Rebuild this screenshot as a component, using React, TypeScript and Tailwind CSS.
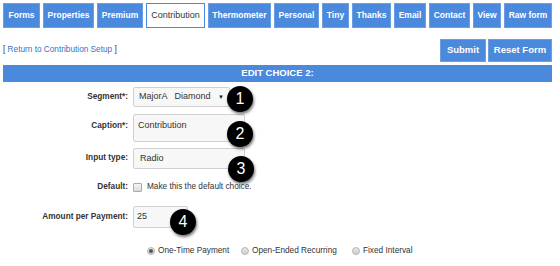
const tabs = [
  { label: "Forms", w: "w-[37px]" },
  { label: "Properties", w: "w-[51px]" },
  { label: "Premium", w: "w-[46px]" },
  { label: "Contribution", w: "w-[59px]", active: true },
  { label: "Thermometer", w: "w-[63px]" },
  { label: "Personal", w: "w-[45px]" },
  { label: "Tiny", w: "w-[27px]" },
  { label: "Thanks", w: "w-[39px]" },
  { label: "Email", w: "w-[32px]" },
  { label: "Contact", w: "w-[41px]" },
  { label: "View", w: "w-[28px]" },
  { label: "Raw form", w: "w-[48px]" },
];

const Badge = ({ n, className }: { n: number; className: string }) => (
  <div
    className={`absolute w-[26px] h-[26px] rounded-full bg-black text-white text-[16px] leading-none flex items-center justify-center shadow-[1px_2px_3px_rgba(0,0,0,0.55)] ${className}`}
  >
    {n}
  </div>
);

const Radio = ({ checked }: { checked?: boolean }) => (
  <span className="w-[8px] h-[8px] rounded-full border border-[#b5b5b5] bg-gradient-to-b from-[#e6e6e6] to-[#cfcfcf] flex items-center justify-center">
    {checked && <span className="w-[4px] h-[4px] rounded-full bg-[#555]" />}
  </span>
);

export default function App() {
  return (
    <div className="w-[560px] h-[266px] bg-white overflow-hidden font-['Liberation_Sans',Arial,sans-serif] text-[#333]">
      {/* tab strip */}
      <div className="flex gap-[3px] pl-[3px] pt-[3px]">
        {tabs.map((t) => (
          <div
            key={t.label}
            className={`${t.w} h-[25px] flex items-center justify-center whitespace-nowrap border ${
              t.active
                ? "bg-white text-[#333] border-[#4a89dc] text-[9px]"
                : "bg-[#4a89dc] text-white border-[#6c9fe2] font-bold text-[8.5px]"
            }`}
          >
            {t.label}
          </div>
        ))}
      </div>

      <div className="flex items-center justify-between pl-[3px] pr-[8px] mt-[11px] h-[23px]">
        <div className="text-[8.25px]">
          [ <span className="text-[#3a70c6]">Return to Contribution Setup</span> ]
        </div>
        <div className="flex gap-[2px] h-full">
          <button className="w-[46px] h-full bg-[#4a89dc] text-white font-bold text-[9.5px] border border-[#6c9fe2]">
            Submit
          </button>
          <button className="w-[64px] h-full bg-[#4a89dc] text-white font-bold text-[9.5px] border border-[#6c9fe2]">
            Reset Form
          </button>
        </div>
      </div>

      <div className="ml-[3px] mr-[8px] mt-[3px] h-[17px] bg-[#4a89dc] text-white font-bold text-[9.5px] flex items-center justify-center">
        EDIT CHOICE 2:
      </div>

      {/* form */}
      <div className="relative">
        <div className="flex items-center mt-[5px] h-[20px]">
          <div className="w-[128px] text-right font-bold text-[8.25px]">Segment*:</div>
          <div className="ml-[5px] w-[97px] h-full border border-[#d0d0d0] bg-[#f7f7f7] rounded-[2px] flex items-center px-[5px] text-[9px] whitespace-pre">
            <span className="flex-1">MajorA   Diamond</span>
            <span className="text-[6px] text-[#222]">▼</span>
          </div>
        </div>

        <div className="flex items-start mt-[7px] h-[28px]">
          <div className="w-[128px] text-right font-bold text-[8.25px] pt-[6px]">Caption*:</div>
          <div className="ml-[5px] w-[112px] h-full border border-[#d0d0d0] bg-[#f7f7f7] rounded-[2px] px-[4px] pt-[4px] text-[9px]">
            Contribution
          </div>
        </div>

        <div className="flex items-center mt-[6px] h-[21px]">
          <div className="w-[128px] text-right font-bold text-[8.25px]">Input type:</div>
          <div className="ml-[5px] w-[112px] h-full border border-[#d0d0d0] bg-[#f7f7f7] rounded-[2px] flex items-center px-[6px] text-[9px]">
            Radio
          </div>
        </div>

        <div className="flex items-center mt-[12px] h-[12px]">
          <div className="w-[128px] text-right font-bold text-[8.25px]">Default:</div>
          <span className="ml-[5px] w-[9px] h-[9px] border border-[#aaa] rounded-[1px] bg-gradient-to-b from-[#f4f4f4] to-[#dcdcdc]" />
          <span className="ml-[5px] text-[8.25px]">Make this the default choice.</span>
        </div>

        <div className="flex items-center mt-[13px] h-[22px]">
          <div className="w-[128px] text-right font-bold text-[8.25px]">Amount per Payment:</div>
          <div className="ml-[5px] w-[55px] h-full border border-[#d0d0d0] bg-[#f7f7f7] rounded-[2px] flex items-center px-[3px] text-[9px]">
            25
          </div>
        </div>

        <div className="flex items-center mt-[18px] h-[10px] pl-[147px] text-[8.25px]">
          <div className="w-[94px] flex items-center gap-[3px]">
            <Radio checked />
            <span>One-Time Payment</span>
          </div>
          <div className="w-[111px] flex items-center gap-[3px]">
            <Radio />
            <span>Open-Ended Recurring</span>
          </div>
          <div className="flex items-center gap-[3px]">
            <Radio />
            <span>Fixed Interval</span>
          </div>
        </div>

        <Badge n={1} className="left-[227px] top-[-1px]" />
        <Badge n={2} className="left-[227px] top-[34px]" />
        <Badge n={3} className="left-[228px] top-[69px]" />
        <Badge n={4} className="left-[170px] top-[122px]" />
      </div>
    </div>
  );
}
